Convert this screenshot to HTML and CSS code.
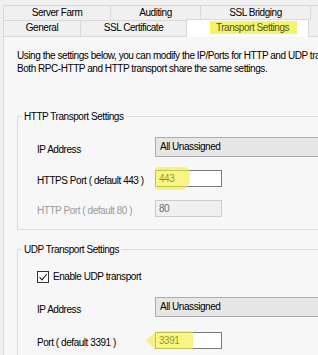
FILE: index.html
```html
<!doctype html>
<html>
<head>
<meta charset="utf-8">
<title>Transport Settings</title>
<link rel="stylesheet" href="styles.css">
</head>
<body>
<div class="tabs">
    <div class="tabrow">
        <div class="tab w-farm">Server Farm</div>
        <div class="tab w-audit">Auditing</div>
        <div class="tab w-bridge">SSL Bridging</div>
        <div class="tab w-more"></div>
    </div>
    <div class="tabrow bottom">
        <div class="tab w-general">General</div>
        <div class="tab w-cert">SSL Certificate</div>
        <div class="tab w-transport active"><span class="mark">Transport Settings</span></div>
    </div>
</div>
<div class="panel">
    <p class="intro">Using the settings below, you can modify the IP/Ports for HTTP and UDP transport.</p>
    <p class="intro">Both RPC-HTTP and HTTP transport share the same settings.</p>

    <fieldset class="group http">
        <legend>HTTP Transport Settings</legend>
        <div class="row first">
            <label>IP Address</label>
            <div class="combo">All Unassigned</div>
        </div>
        <div class="row">
            <label>HTTPS Port ( default 443 )</label>
            <div class="field"><span class="input">443</span><span class="hl hl-443"></span></div>
        </div>
        <div class="row">
            <label class="off">HTTP Port ( default 80 )</label>
            <div class="field"><span class="input disabled">80</span></div>
        </div>
    </fieldset>

    <fieldset class="group udp">
        <legend>UDP Transport Settings</legend>
        <div class="check">
            <span class="box"><svg width="10" height="10" viewBox="0 0 10 10"><path d="M1.5 5.2 L4 7.8 L8.8 2" fill="none" stroke="#222" stroke-width="1.1"/></svg></span>
            <span>Enable UDP transport</span>
        </div>
        <div class="row">
            <label>IP Address</label>
            <div class="combo">All Unassigned</div>
        </div>
        <div class="row">
            <label>Port ( default 3391 )</label>
            <div class="field"><span class="input">3391</span><span class="hl hl-3391"></span></div>
        </div>
    </fieldset>
</div>
</body>
</html>
```
FILE: styles.css
```css
* { box-sizing: border-box; }
body { margin: 0; width: 318px; height: 355px; overflow: hidden; background: #f0f0f0; color: #000; font: 10px/13px "Liberation Sans", Arial, sans-serif; letter-spacing: -0.45px; }

/* tab strip */
.tabs { padding: 5px 0 0 3px; }
.tabrow { display: flex; height: 15px; }
.tabrow.bottom { height: 16px; }
.tab { flex: none; height: 100%; border: 1px solid #d9d9d9; border-bottom: none; margin-right: -1px; text-align: center; line-height: 14px; white-space: nowrap; }
.w-farm { width: 108px; }
.w-audit { width: 91px; }
.w-bridge { width: 111px; }
.w-more { width: 30px; }
.w-general { width: 78px; }
.w-cert { width: 107px; }
.w-transport { width: 123px; }
.tab.active { background: #fff; height: 18px; margin-top: -1px; position: relative; z-index: 1; padding-top: 1px; }
.mark { display: inline-block; background: #f3f36c; color: #55551c; padding: 0 8px 0 6px; line-height: 13px; margin-left: 12px; }

/* page */
.panel { margin-left: 3px; height: 320px; border-top: 1px solid #d9d9d9; border-left: 1px solid #d9d9d9; background: #f7f7f7; padding: 12px 0 0 13px; overflow: hidden; }
.intro { margin: 0; white-space: nowrap; }

.group { margin: 0; width: 330px; border: 1px solid #dcdcdc; border-right: none; padding: 14px 0 12px 19px; }
.group legend { margin-left: -15px; padding: 0 2px; line-height: 13px; }
.group.http { margin-top: 35px; }
.group.udp { margin-top: 13px; padding-bottom: 20px; }

.row { display: flex; align-items: center; margin-top: 13px; }
.row.first { margin-top: 0; }
.row label { width: 118px; flex: none; white-space: nowrap; padding-top: 4px; }
.row label.off { color: #9a9a9a; }

.combo { width: 200px; height: 20px; background: #e6e6e6; border: 1px solid #adadad; padding: 2px 0 0 4px; white-space: nowrap; }

.field { position: relative; }
.input { display: block; width: 67px; height: 17px; background: #fff; border: 1px solid #7a7a7a; padding: 1px 0 0 3px; }
.input.disabled { background: #f0f0f0; border-color: #cccccc; color: #6d6d6d; }

/* highlighter strokes drawn over the boxes */
.hl { position: absolute; background: rgba(240, 240, 60, 0.62); }
.hl-443 { left: 0; top: -3px; width: 35px; height: 23px; border-radius: 2px 6px 10px 3px; }
.hl-3391 { left: -9px; top: -1px; width: 47px; height: 18px; clip-path: polygon(0 55%, 22% 0, 100% 0, 100% 100%, 20% 100%); }

.check { display: flex; align-items: center; height: 13px; }
.box { width: 12px; height: 12px; border: 1px solid #333; background: #fff; margin-right: 4px; display: flex; align-items: center; justify-content: center; }
.udp .row { margin-top: 14px; }
.udp .row + .row { margin-top: 15px; }
```
